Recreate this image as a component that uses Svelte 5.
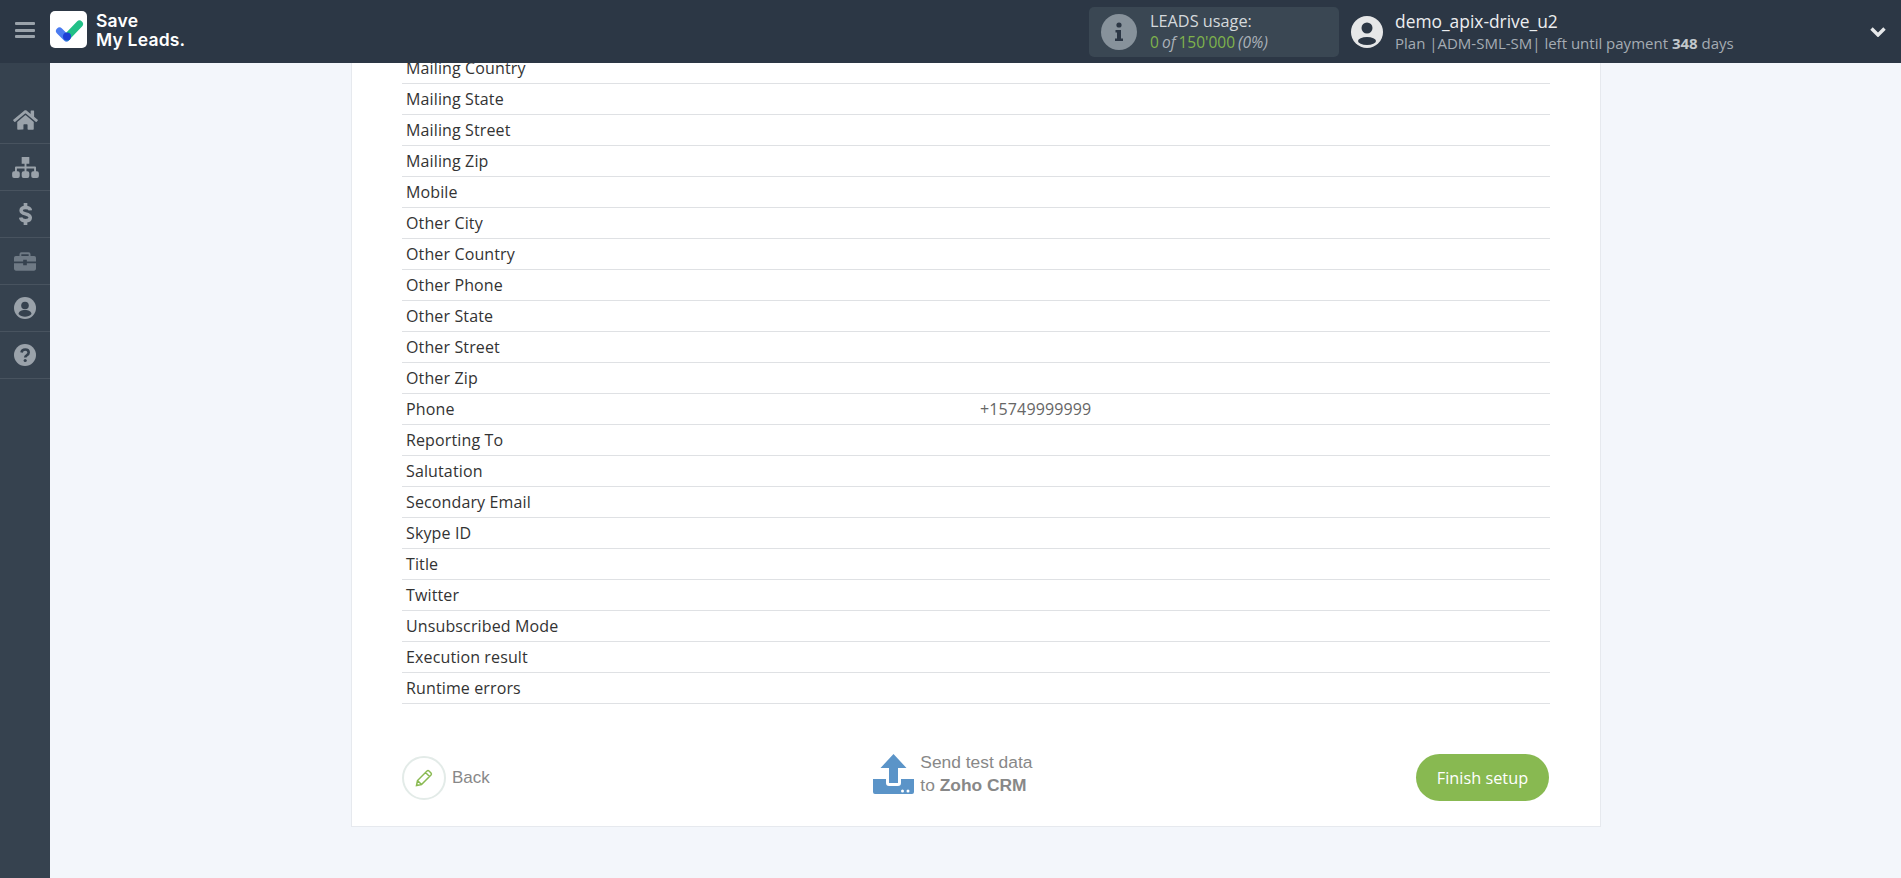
<script>
  // Test table, last part of the scrolled page
  const rows = [
    ['Mailing Country', ''],
    ['Mailing State', ''],
    ['Mailing Street', ''],
    ['Mailing Zip', ''],
    ['Mobile', ''],
    ['Other City', ''],
    ['Other Country', ''],
    ['Other Phone', ''],
    ['Other State', ''],
    ['Other Street', ''],
    ['Other Zip', ''],
    ['Phone', '+15749999999'],
    ['Reporting To', ''],
    ['Salutation', ''],
    ['Secondary Email', ''],
    ['Skype ID', ''],
    ['Title', ''],
    ['Twitter', ''],
    ['Unsubscribed Mode', ''],
    ['Execution result', ''],
    ['Runtime errors', '']
  ];
</script>

<div class="page">
  <header class="topbar">
    <button class="burger" aria-label="Menu">
      <span></span><span></span><span></span>
    </button>
    <div class="logo">
      <svg viewBox="0 0 37 37" class="logo-mark">
        <rect width="37" height="37" rx="5" fill="#fff"/>
        <path d="M9.500 20l7 7" stroke="#4a7bf0" stroke-width="7" stroke-linecap="round" fill="none"/>
        <path d="M17 26L29.500 13" stroke="#21c087" stroke-width="7" stroke-linecap="round" fill="none"/>
        <circle cx="17" cy="25.500" r="4" fill="#1d3fd6"/>
      </svg>
      <div class="logo-text">Save<br>My Leads.</div>
    </div>

    <div class="usage">
      <svg class="usage-icon" viewBox="0 0 36 36">
        <circle cx="18" cy="18" r="18" fill="#87929b"/>
        <circle cx="18" cy="11" r="2.600" fill="#2c3745"/>
        <path d="M14.500 16h5.500v8.500h2V27h-8v-2.500h2V18.500h-1.500z" fill="#2c3745"/>
      </svg>
      <div>
        <div class="usage-title">LEADS usage:</div>
        <div class="usage-count"><b>0</b> <i>of</i> <b>150'000</b> <i>(0%)</i></div>
      </div>
    </div>

    <div class="user">
      <svg class="avatar" viewBox="0 0 32 32">
        <circle cx="16" cy="16" r="16" fill="#e6e7e8"/>
        <circle cx="16" cy="12" r="5.500" fill="#2c3745"/>
        <ellipse cx="16" cy="25" rx="9" ry="4" fill="#2c3745"/>
      </svg>
      <div>
        <div class="user-name">demo_apix-drive_u2</div>
        <div class="user-plan">Plan |ADM-SML-SM| left until payment <b>348</b> days</div>
      </div>
    </div>

    <svg class="chevron" viewBox="0 0 16 10">
      <path d="M1.500 1.500L8 8l6.500-6.500" fill="none" stroke="#e6e8ea" stroke-width="3.400"/>
    </svg>
  </header>

  <div class="body">
    <nav class="sidebar">
      <a href="#home" aria-label="Home">
        <svg viewBox="0 0 576 512" width="25" height="22"><path fill="#9aa2aa" d="M280 148L96 300v164c0 9 7 16 16 16l112-.300c9 0 16-7 16-16V368c0-9 7-16 16-16h64c9 0 16 7 16 16v96c0 9 7 16 16 16l112 .300c9 0 16-7 16-16V300L296 148c-4-4-12-4-16 0zM572 251l-84-69V44c0-7-5-12-12-12h-56c-7 0-12 5-12 12v72l-90-74c-18-15-43-15-61 0L4 251c-5 4-6 12-2 17l26 31c4 5 12 6 17 2L280 107c4-4 12-4 16 0l235 194c5 4 13 3 17-2l26-31c4-5 3-13-2-17z"/></svg>
      </a>
      <a href="#sitemap" aria-label="Connections">
        <svg viewBox="0 0 28 22" width="27" height="21"><path fill="#9aa2aa" d="M10 0h8v7h-3v3h9a1 1 0 011 1v4h1a2 2 0 012 2v3a2 2 0 01-2 2h-4a2 2 0 01-2-2v-3a2 2 0 012-2h1v-3h-8v3h1a2 2 0 012 2v3a2 2 0 01-2 2h-4a2 2 0 01-2-2v-3a2 2 0 012-2h1v-3H5v3h1a2 2 0 012 2v3a2 2 0 01-2 2H2a2 2 0 01-2-2v-3a2 2 0 012-2h1v-4a1 1 0 011-1h9V7h-3z"/></svg>
      </a>
      <a href="#billing" aria-label="Billing">
        <svg viewBox="0 0 14 24" width="13" height="22"><path fill="none" stroke="#9aa2aa" stroke-width="3.800" d="M12.300 8C12 5.500 10 4.800 7 4.800 4 4.800 2.200 6 2.200 8.200s2 3 4.800 3.700 5.200 1.500 5.200 4-2.200 3.400-5.200 3.400-4.900-1-5.300-3.500"/><path fill="#9aa2aa" d="M5 0h4v4H5zM5 20h4v4H5z"/></svg>
      </a>
      <a href="#jobs" aria-label="Jobs">
        <svg viewBox="0 0 24 20" width="22" height="19"><path fill="#6f7a85" d="M8 0h8a2 2 0 012 2v2h4a2 2 0 012 2v4H14V8h-4v2H0V6a2 2 0 012-2h4V2a2 2 0 012-2zm0 2v2h8V2zM0 12h10v2h4v-2h10v6a2 2 0 01-2 2H2a2 2 0 01-2-2z"/></svg>
      </a>
      <a href="#account" aria-label="Account">
        <svg viewBox="0 0 22 22" width="22" height="22"><circle cx="11" cy="11" r="11" fill="#9aa2aa"/><circle cx="11" cy="8.500" r="3.800" fill="#36424f"/><path d="M4.500 17c.5-3 3-4 6.500-4s6 1 6.500 4c-1.500 1.800-4 2.800-6.500 2.800S6 18.800 4.500 17z" fill="#36424f"/></svg>
      </a>
      <a href="#help" aria-label="Help">
        <svg viewBox="0 0 22 22" width="22" height="22"><circle cx="11" cy="11" r="11" fill="#9aa2aa"/><path d="M7.500 8.500C7.800 6.500 9.200 5.500 11.200 5.500c2 0 3.500 1.200 3.500 3 0 2.800-3.500 2.600-3.500 5" fill="none" stroke="#36424f" stroke-width="2.600"/><circle cx="11.200" cy="16.500" r="1.600" fill="#36424f"/></svg>
      </a>
    </nav>

    <main class="content">
      <section class="card">
        <table class="data">
          <tbody>
            {#each rows as [name, value]}
              <tr>
                <td class="name">{name}</td>
                <td class="value">{value}</td>
              </tr>
            {/each}
          </tbody>
        </table>

        <div class="actions">
          <a class="back" href="#back">
            <span class="back-circle">
              <svg viewBox="0 0 20 20" width="20" height="20"><path d="M2.500 17.500l1-5L13 3a1.500 1.500 0 012 0l2 2a1.500 1.500 0 010 2l-9.500 9.500zM11.500 4.500l4 4M3.500 12.500l4 4" fill="none" stroke="#8aba52" stroke-width="1.500"/></svg>
            </span>
            Back
          </a>

          <a class="send" href="#send">
            <svg viewBox="0 0 41 40" width="41" height="40"><path fill="#5b94c8" d="M20.500 0l13 14H25v15h-9V14H7.500z"/><path fill="#5b94c8" d="M0 25h13v4a3 3 0 003 3h9a3 3 0 003-3v-4h13v13a2 2 0 01-2 2H2a2 2 0 01-2-2z"/><circle cx="29.500" cy="37" r="1.500" fill="#fff"/><circle cx="35" cy="37" r="1.500" fill="#fff"/></svg>
            <span>Send test data<br>to <b>Zoho CRM</b></span>
          </a>

          <button class="finish">Finish setup</button>
        </div>
      </section>
    </main>
  </div>
</div>

<style>
  :global(body) {
    margin: 0;
    background: #f3f6fb;
    font-family: "Open Sans", sans-serif;
  }

  .page {
    height: 878px;
    display: flex;
    flex-direction: column;
    overflow: hidden;
  }

  /* Barra superior */
  .topbar {
    height: 63px;
    flex-shrink: 0;
    display: flex;
    align-items: center;
    background: #2c3745;
    color: #fff;
  }
  .burger {
    width: 50px;
    height: 63px;
    padding: 0 0 3px 15px;
    display: flex;
    flex-direction: column;
    justify-content: center;
    gap: 3.500px;
    background: none;
    border: 0;
  }
  .burger span {
    display: block;
    width: 20px;
    height: 3px;
    border-radius: 1px;
    background: #9aa2aa;
  }
  .logo {
    display: flex;
    align-items: center;
    gap: 9px;
    width: 1039px;
    margin-bottom: 4px;
  }
  .logo-mark { width: 37px; height: 37px; }
  .logo-text {
    font-family: Inter, sans-serif;
    font-weight: 600;
    font-size: 17.500px;
    line-height: 19px;
    letter-spacing: .2px;
  }
  .usage {
    width: 250px;
    height: 50px;
    box-sizing: border-box;
    padding: 0 12px;
    display: flex;
    align-items: center;
    gap: 13px;
    border-radius: 5px;
    background: #3a4753;
  }
  .usage-icon { width: 36px; height: 36px; flex-shrink: 0; }
  .usage-title { font-size: 16.300px; line-height: 21px; color: #d5d9dc; }
  .usage-count { font-size: 15.500px; line-height: 21px; color: #aab1b8; word-spacing: -1px; }
  .usage-count b { font-weight: 400; color: #7fb34c; }
  .user {
    display: flex;
    align-items: center;
    gap: 12px;
    margin-left: 12px;
    width: 519px;
  }
  .avatar { width: 32px; height: 32px; flex-shrink: 0; }
  .user-name { font-size: 17.400px; line-height: 23px; color: #eceef0; }
  .user-plan { font-size: 15px; line-height: 20px; color: #a5acb3; }
  .user-plan b { font-weight: 700; color: #c2c7cc; }
  .chevron { width: 16px; height: 10px; }

  /* Menú lateral */
  .body {
    flex: 1;
    min-height: 0;
    display: flex;
  }
  .sidebar {
    width: 50px;
    flex-shrink: 0;
    padding-top: 34px;
    background: #36424f;
  }
  .sidebar a {
    height: 46px;
    display: flex;
    align-items: center;
    justify-content: center;
    border-bottom: 1px solid #48535f;
  }

  /* Contenido, anclado abajo porque la página está desplazada */
  .content {
    flex: 1;
    min-width: 0;
    padding: 0 300px 51px 301px;
    display: flex;
    flex-direction: column;
    justify-content: flex-end;
    overflow: hidden;
  }
  .card {
    flex-shrink: 0;
    padding: 0 50px 25px;
    background: #fff;
    border: 1px solid #e6e9ee;
    border-top: 0;
  }
  .data {
    width: 100%;
    border-collapse: collapse;
    table-layout: fixed;
    color: #333;
    font-size: 16px;
    letter-spacing: .13px;
  }
  .data td {
    height: 30px;
    padding: 0 4px;
    border-bottom: 1px solid #dfe1e4;
  }
  .value { color: #666; }

  .actions {
    margin-top: 50px;
    margin-right: 1px;
    display: flex;
    align-items: center;
    justify-content: space-between;
  }
  .back {
    display: flex;
    align-items: center;
    gap: 6px;
    color: #888;
    font-family: "Liberation Sans", Arial, sans-serif;
    font-size: 17px;
    text-decoration: none;
  }
  .back-circle {
    width: 44px;
    height: 44px;
    box-sizing: border-box;
    display: flex;
    align-items: center;
    justify-content: center;
    border: 2px solid #e3ebe8;
    border-radius: 50%;
  }
  .send {
    align-self: flex-start;
    margin-top: -3px;
    display: flex;
    align-items: center;
    gap: 6px;
    color: #888;
    font-family: "Liberation Sans", Arial, sans-serif;
    font-size: 17.400px;
    line-height: 22.500px;
    text-decoration: none;
  }
  .finish {
    width: 133px;
    height: 47px;
    padding: 0;
    border: 0;
    border-radius: 24px;
    background: #88b951;
    color: #fff;
    font-family: "Open Sans", sans-serif;
    font-size: 16.300px;
  }
</style>
